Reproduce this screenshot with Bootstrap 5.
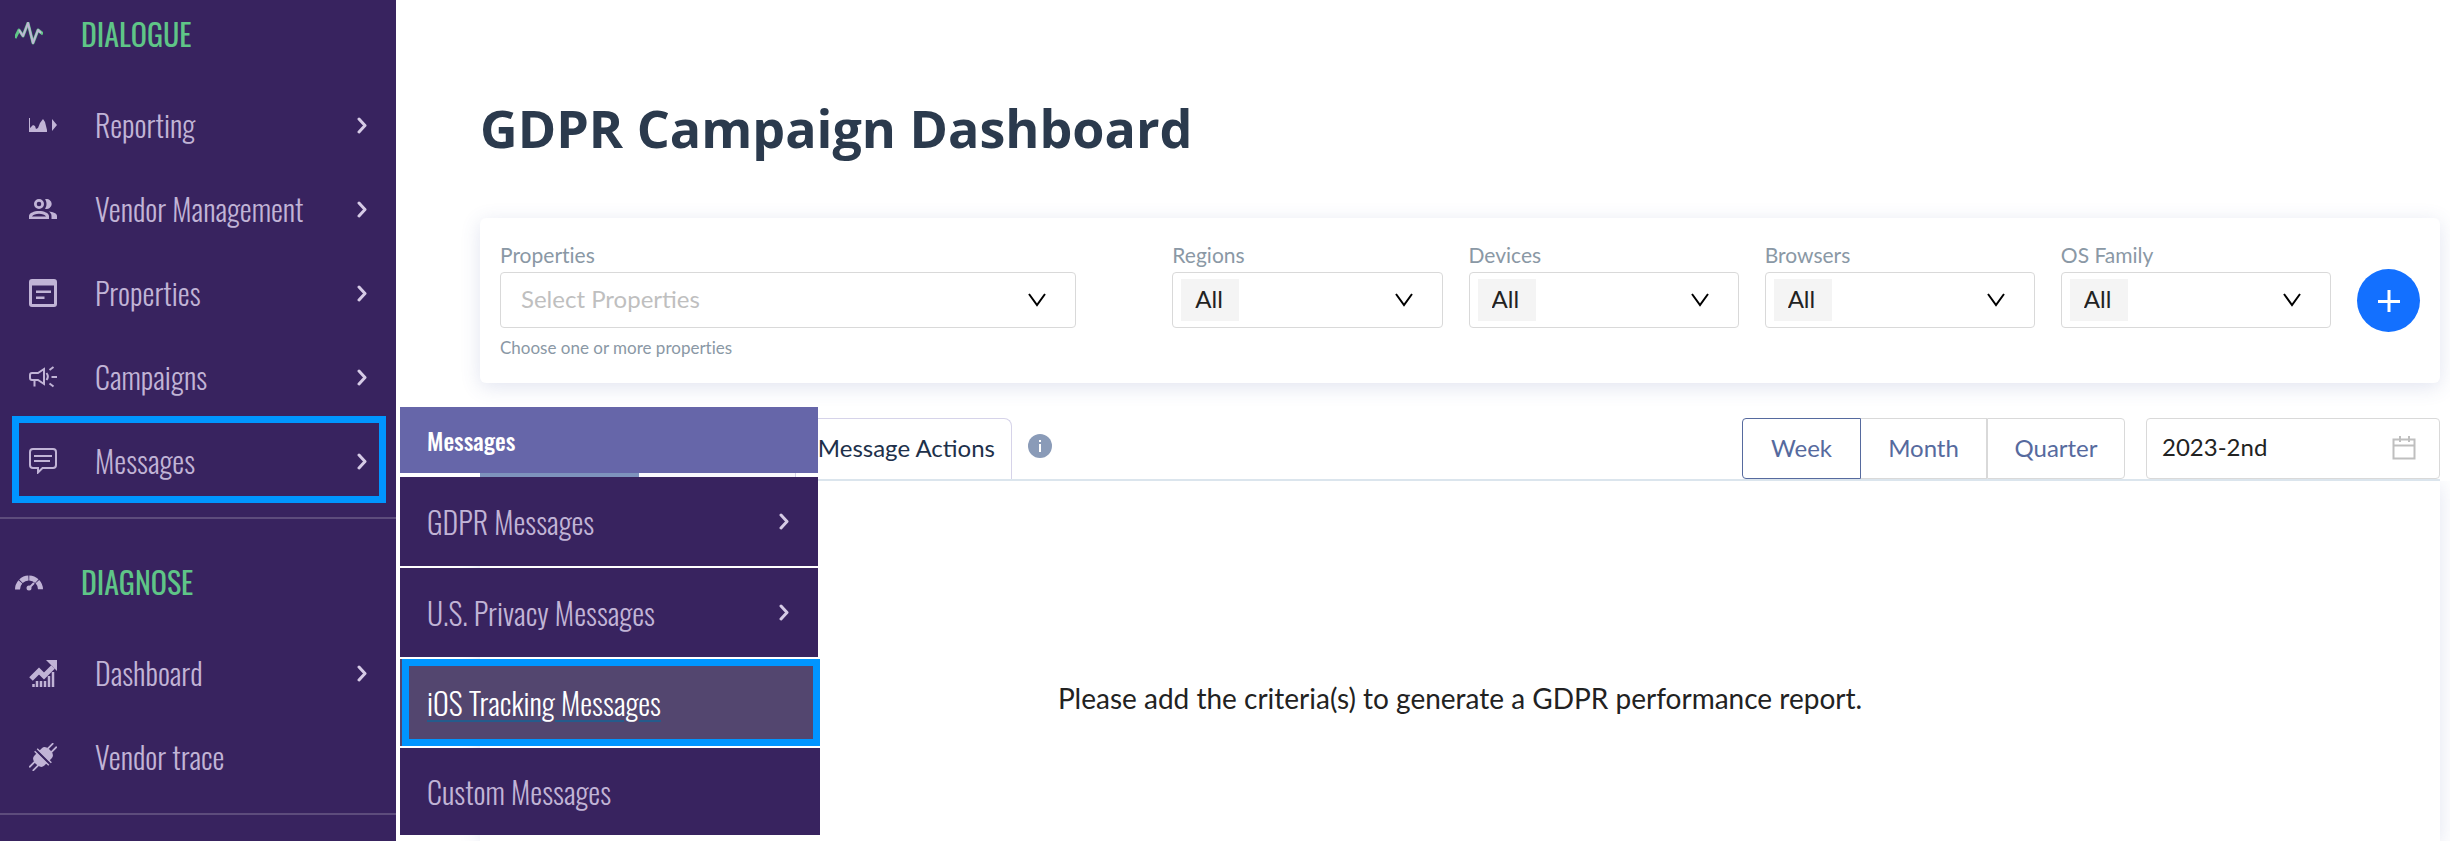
<!DOCTYPE html>
<html lang="en">
<head>
<meta charset="utf-8">
<meta name="viewport" content="width=device-width, initial-scale=1">
<title>GDPR Campaign Dashboard</title>
<link href="https://cdn.jsdelivr.net/npm/bootstrap@5.3.0/dist/css/bootstrap.min.css" rel="stylesheet">
<style>
:root { --plum: #38235f; --lilac: #c1b4d6; --hot: #0095ff; --line: #d9d9d9; }
body { font-family: Lato, "Open Sans", sans-serif; font-variant-ligatures: none; color: #222; background: #fff; overflow-x: hidden; }

/* Sidebar */
.side { width: 396px; background: var(--plum); font-family: Oswald, "Roboto Condensed", "Open Sans Condensed", sans-serif; font-weight: 300; font-size: 30px; line-height: 42px; z-index: 2; }
.side a { color: var(--lilac); text-decoration: none; }
.side svg { flex: none; }
.group { padding-bottom: 14px; border-bottom: 2px solid #5d4c7c; }
.group + .group { padding-top: 29px; }
.group-title { height: 68px; margin: 0 0 15px; padding-left: 15px; gap: 38px; font-size: 30px; font-weight: 400; line-height: 42px; color: #5fc587; }
.entry { height: 84px; padding: 0 28px 0 29px; gap: 38px; }
.marked::before { content: ""; position: absolute; inset: -3px 10px 0 12px; border: 7px solid var(--hot); pointer-events: none; }

/* Fly-out menu */
.flyout { position: absolute; left: 400px; top: -12px; width: 418px; }
.flyout-title { height: 66px; padding-left: 27px; background: #6666a9; color: #fff; font-size: 24px; font-weight: 500; margin-bottom: 4px; }
.flyout-list { gap: 2px; }
.flyout a { height: 89px; padding: 0 28px 0 27px; background: var(--plum); }
.flyout .wide { width: 420px; height: 87px; }
.flyout .current { position: relative; color: #fff; background: #53466f; text-decoration: underline; text-decoration-color: #255b8b; text-decoration-thickness: 2px; text-underline-offset: 4px; }
.flyout .current::before { content: ""; position: absolute; inset: 0 0 0 2px; border: 7px solid var(--hot); }

/* Main column */
.main { padding: 92px 10px 0 84px; min-width: 0; }
h1 { font: 700 52px/72px "Open Sans", sans-serif; color: #2b3a4d; margin: 0 0 54px; }
.filters { min-height: 165px; padding: 20px 20px 0; border-radius: 6px; box-shadow: 0 4px 20px rgba(70, 90, 160, .16); display: grid; grid-template-columns: 646fr repeat(4, 270fr) 63px; gap: 26px; }
.filters .props { padding-right: 70px; }
.filters label { font-size: 21px; line-height: 34px; color: #8a98a5; display: block; }
.pick { appearance: none; display: block; width: 100%; height: 56px; border: 1px solid var(--line); border-radius: 4px; font-size: 24px; color: #222; padding: 0 56px 2px 22px; background-color: #fff; background-repeat: no-repeat;
  background-image: url("data:image/svg+xml,%3Csvg xmlns='http://www.w3.org/2000/svg' width='20' height='16' fill='none' stroke='%23000' stroke-width='2'%3E%3Cpath d='M2 2l8 11 8-11'/%3E%3C/svg%3E"), linear-gradient(#f4f4f4, #f4f4f4);
  background-position: right 28px center, 8px center; background-size: 20px 16px, 58px 42px; }
.pick.blank { color: #bfbfbf; padding-left: 20px; background-size: 20px 16px, 0 0; }
.hint { font-size: 17px; line-height: 24px; color: #8a98a5; margin-top: 8px; }
.add { width: 63px; height: 63px; border: 0; border-radius: 50%; background: #1370ff; margin-top: 31px; padding: 0; }
.toolbar { margin-top: 35px; height: 63px; border-bottom: 2px solid #dbe5ed; font-size: 24px; }
.tab-on { width: 159px; background: #7e93bd; }
.tab-gap { width: 156px; background: #f9f9fd; }
.tab-btn { width: 217px; height: 61px; border: 1px solid #d6d3e9; border-bottom: 0; border-radius: 0 8px 0 0; background: #fff; color: #20304a; padding: 0 16px 2px 0; text-align: right; }
.info { margin: 16px 0 0 16px; height: 24px; }
.seg button { height: 61px; background: #fff; border: 1px solid var(--line); color: #566a9e; padding: 0 0 2px; }
.seg .wk { width: 119px; border-color: #566a9e; border-radius: 4px 0 0 4px; }
.seg .mo { width: 126px; border-left: 0; }
.seg .qu { width: 138px; border-radius: 0 4px 4px 0; }
.date { width: 294px; height: 61px; margin-left: 21px; position: relative; }
.date input { width: 100%; height: 100%; border: 1px solid var(--line); border-radius: 4px; padding: 0 60px 4px 15px; color: #222; background: #fff; }
.date svg { position: absolute; right: 24px; top: 18px; }
.panel { box-shadow: 0 4px 20px rgba(70, 90, 160, .16); clip-path: inset(0 -10px 0 -20px); padding-top: 196px; text-align: center; font-size: 28px; line-height: 42px; }
</style>
</head>
<body>
<svg class="d-none" aria-hidden="true">
  <symbol id="chev" viewBox="0 0 11 17"><path d="M2 2l6 6.500-6 6.500" fill="none" stroke="#d6cbe6" stroke-width="3" stroke-linecap="round" stroke-linejoin="round"/></symbol>
</svg>
<div class="d-flex min-vh-100">
  <nav class="side flex-shrink-0 position-relative" aria-label="Main">
    <section class="group">
      <h2 class="group-title d-flex align-items-center">
        <svg width="28" height="24" viewBox="0 0 28 24" fill="none" stroke-linejoin="round"><path d="M0 16L4 8l4 6 5-13 5 20 5-13 5 4" stroke="#5fc587" stroke-width="3"/><path d="M4 8l4 6 5-13 5 20 5-13 3 3" stroke="#c1b4d6" stroke-width="2"/></svg>
        <span>DIALOGUE</span>
      </h2>
      <a href="#" class="entry d-flex align-items-center">
        <svg width="28" height="16" viewBox="0 0 28 16" fill="#c1b4d6"><path d="M0 1h1v10l3-3 2 1 1 3 2-1 2-5 3-4 2 3 2 8v2H0zM23 2l5 6-5 6z"/></svg>
        <span>Reporting</span><svg class="ms-auto" width="11" height="17"><use href="#chev"/></svg>
      </a>
      <a href="#" class="entry d-flex align-items-center">
        <svg width="28" height="20" viewBox="0 0 28 20" fill="#c1b4d6"><path fill-rule="evenodd" d="M10 0a5 5 0 1 1 0 10 5 5 0 0 1 0-10zm0 2.700a2.300 2.300 0 1 0 0 4.600 2.300 2.300 0 0 0 0-4.600zM0 20v-3c0-3 5-5 10-5s10 2 10 5v3zm3-2.600h14c-1-1.600-4-2.700-7-2.700s-6 1.100-7 2.700z"/><path d="M16 .300a5 5 0 1 1 0 9.400c2-2.600 2-6.600 0-9.400zM19.500 12.500c5 .5 8.500 2 8.500 4.500v3h-5.500v-3c0-2-1-3.500-3-4.500z"/></svg>
        <span>Vendor Management</span><svg class="ms-auto" width="11" height="17"><use href="#chev"/></svg>
      </a>
      <a href="#" class="entry d-flex align-items-center">
        <svg width="28" height="28" viewBox="0 0 28 28" fill="#c1b4d6"><path fill-rule="evenodd" d="M3 0h22a3 3 0 0 1 3 3v22a3 3 0 0 1-3 3H3a3 3 0 0 1-3-3V3a3 3 0 0 1 3-3zm0 6.500V25h22V6.500z"/><path d="M7 11.500h15V14H7zM7 17.500h8.500V20H7z"/></svg>
        <span>Properties</span><svg class="ms-auto" width="11" height="17"><use href="#chev"/></svg>
      </a>
      <a href="#" class="entry d-flex align-items-center">
        <svg width="28" height="22" viewBox="0 0 28 22" fill="none" stroke="#c1b4d6" stroke-width="2"><path d="M1 9a2 2 0 0 1 2-2h6l6-4v15l-6-4H3a2 2 0 0 1-2-2zM5.500 14v6.500M17.500 7c1.500 2 1.500 5 0 7M20.500 4l4-3M22.500 11H28M20.500 17.500l4 3"/></svg>
        <span>Campaigns</span><svg class="ms-auto" width="11" height="17"><use href="#chev"/></svg>
      </a>
      <div class="position-relative marked">
        <a href="#" class="entry d-flex align-items-center" aria-expanded="true">
          <svg width="28" height="26" viewBox="0 0 28 26" fill="none" stroke="#c1b4d6" stroke-width="2"><path d="M4 1h20a3 3 0 0 1 3 3v13a3 3 0 0 1-3 3H13.500L9 24.500V20H4a3 3 0 0 1-3-3V4a3 3 0 0 1 3-3zM5 8h18M5 13h16"/></svg>
          <span>Messages</span><svg class="ms-auto" width="11" height="17"><use href="#chev"/></svg>
        </a>
        <div class="flyout d-flex flex-column">
          <div class="flyout-title d-flex align-items-center">Messages</div>
          <div class="flyout-list d-flex flex-column">
            <a href="#" class="d-flex align-items-center"><span>GDPR Messages</span><svg class="ms-auto" width="11" height="17"><use href="#chev"/></svg></a>
            <a href="#" class="d-flex align-items-center"><span>U.S. Privacy Messages</span><svg class="ms-auto" width="11" height="17"><use href="#chev"/></svg></a>
            <a href="#" class="wide current d-flex align-items-center">iOS Tracking Messages</a>
            <a href="#" class="wide d-flex align-items-center">Custom Messages</a>
          </div>
        </div>
      </div>
    </section>
    <section class="group">
      <h2 class="group-title d-flex align-items-center">
        <svg width="28" height="17" viewBox="0 0 28 17" fill="none" stroke="#c1b4d6"><path d="M2.500 15.500a11.500 11.500 0 0 1 23 0" stroke-width="5" stroke-dasharray="8.300 .8"/><path d="M14 14l5-5" stroke-width="2"/><circle cx="14" cy="14" r="2.500" fill="#c1b4d6" stroke="none"/></svg>
        <span>DIAGNOSE</span>
      </h2>
      <a href="#" class="entry d-flex align-items-center">
        <svg width="28" height="27" viewBox="0 0 28 27"><path d="M2 19l8-8 5 5 9-9" fill="none" stroke="#c1b4d6" stroke-width="5"/><path d="M17 0h11v11z" fill="#c1b4d6"/><path d="M4.500 27v-3M8 27v-6M12 27v-6M16 27v-6M20 27V16M24 27V12" stroke="#c1b4d6" stroke-width="2.500"/></svg>
        <span>Dashboard</span><svg class="ms-auto" width="11" height="17"><use href="#chev"/></svg>
      </a>
      <a href="#" class="entry d-flex align-items-center">
        <svg width="28" height="28" viewBox="0 0 28 28"><g transform="rotate(45 14 14)" stroke="#c1b4d6" fill="#c1b4d6"><path d="M7 12.500V9q0-5 7-5t7 5v3.500zM7 15.500V19q0 5 7 5t7-5v-3.500z" stroke="none"/><path d="M4 12.200h20M4 15.800h20" stroke-width="1.500"/><path d="M11.500 5v-8M16.500 5v-8M11.500 23v8M16.500 23v8" stroke-width="1.800"/></g></svg>
        <span>Vendor trace</span>
      </a>
    </section>
  </nav>

  <main class="main flex-grow-1 d-flex flex-column">
    <h1>GDPR Campaign Dashboard</h1>
    <form class="filters">
      <div class="props">
        <label for="properties">Properties</label>
        <select id="properties" class="pick blank"><option>Select Properties</option></select>
        <div class="hint">Choose one or more properties</div>
      </div>
      <div><label for="regions">Regions</label><select id="regions" class="pick"><option>All</option></select></div>
      <div><label for="devices">Devices</label><select id="devices" class="pick"><option>All</option></select></div>
      <div><label for="browsers">Browsers</label><select id="browsers" class="pick"><option>All</option></select></div>
      <div><label for="os">OS Family</label><select id="os" class="pick"><option>All</option></select></div>
      <button type="button" class="add d-flex align-items-center justify-content-center" aria-label="Add"><svg width="24" height="24" viewBox="0 0 24 24" stroke="#fff" stroke-width="3"><path d="M12 1v22M1 12.500h22"/></svg></button>
    </form>
    <div class="toolbar d-flex">
      <div class="tab-on"></div>
      <div class="tab-gap"></div>
      <button type="button" class="tab-btn">Message Actions</button>
      <svg class="info" width="24" height="24" viewBox="0 0 24 24" role="img" aria-label="Info"><circle cx="12" cy="12" r="12" fill="#8a9bb8"/><path d="M12 10v8M12 6v2" stroke="#fff" stroke-width="2"/></svg>
      <div class="seg d-flex ms-auto" role="group" aria-label="Period">
        <button type="button" class="wk">Week</button><button type="button" class="mo">Month</button><button type="button" class="qu">Quarter</button>
      </div>
      <div class="date">
        <input type="text" value="2023-2nd" aria-label="Period start">
        <svg width="24" height="24" viewBox="0 0 24 24" fill="none" stroke="#bfbfbf" stroke-width="2"><path d="M1.500 3.500h21v19h-21zM1.500 9.500h21M8 0v6M17 0v6"/></svg>
      </div>
    </div>
    <div class="panel flex-grow-1">Please add the criteria(s) to generate a GDPR performance report.</div>
  </main>
</div>
<script src="https://cdn.jsdelivr.net/npm/bootstrap@5.3.0/dist/js/bootstrap.bundle.min.js"></script>
</body>
</html>
